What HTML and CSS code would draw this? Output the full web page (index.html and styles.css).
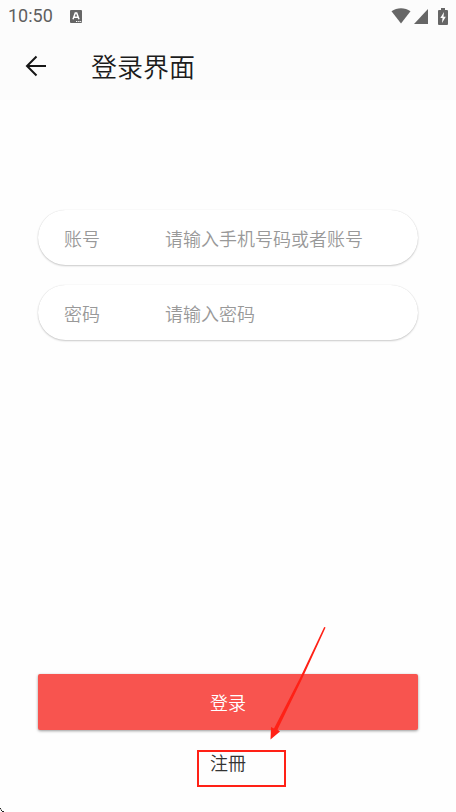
FILE: index.html
```html
<!DOCTYPE html>
<html lang="zh-CN">
<head>
<meta charset="utf-8">
<meta name="viewport" content="width=device-width, initial-scale=1">
<title>登录界面</title>
<link rel="stylesheet" href="styles.css">
</head>
<body>
<header class="top">
  <div class="status">
    <span class="clock">10:50</span>
    <svg class="input-icon" width="12" height="13" viewBox="0 0 12 13" aria-hidden="true">
      <rect width="12" height="13" rx="1" fill="#666"/>
      <path d="M3 9.300 5.300 3h1.400L9 9.300M4 7.200h4" fill="none" stroke="#fff" stroke-width="1.500"/>
      <path d="M6 11.500h1.300M8.200 11.500h1.300M10.200 11.500h1" stroke="#fff" stroke-width="1"/>
    </svg>
    <div class="signals">
      <svg width="20" height="16" viewBox="0 0 20 16" aria-hidden="true"><path d="M.5 3.200C6-.9 14-.9 19.500 3.200L10 15.500z" fill="#666"/></svg>
      <svg width="14" height="15" viewBox="0 0 14 15" aria-hidden="true"><path d="M14 0v15H0z" fill="#666"/></svg>
      <svg class="battery" width="10" height="17" viewBox="0 0 10 17" aria-hidden="true"><path d="M3 0h4v2h2q1 0 1 1v13q0 1-1 1H1q-1 0-1-1V3q0-1 1-1h2z" fill="#666"/><path d="M6 4 2.300 10h2.200L4 15l3.800-6.300H5.500z" fill="#fff"/></svg>
    </div>
  </div>
  <div class="appbar">
    <button class="back" type="button" aria-label="返回">
      <svg width="22" height="22" viewBox="0 0 22 22" aria-hidden="true"><path d="M21 11H2.500M11.500 1.500 2 11l9.500 9.500" fill="none" stroke="#161616" stroke-width="2"/></svg>
    </button>
    <h1>登录界面</h1>
  </div>
</header>
<form class="login">
  <div class="field">
    <label for="account">账号</label>
    <input id="account" type="text" placeholder="请输入手机号码或者账号">
  </div>
  <div class="field">
    <label for="password">密码</label>
    <input id="password" type="password" placeholder="请输入密码">
  </div>
  <div class="actions">
    <button class="submit" type="submit">登录</button>
    <a class="register" href="#register">注冊</a>
    <span class="mark"></span>
    <svg class="arrow" width="60" height="116" viewBox="0 0 60 116" aria-hidden="true"><path d="M56.200 1.900 57.600 2.600 34 54 9.500 104.500 12 106.500 2.500 114.500 3 102 6 103.500 32 53z" fill="#ff2116"/></svg>
  </div>
</form>
<svg class="corner" width="4" height="4" viewBox="0 0 4 4" aria-hidden="true"><path d="M0 0h1v1H0zM1 2h1v1H1zM2 3h2v1H2z" fill="#222"/><path d="M0 1h1v1H0zM1 1h1v1H1z" fill="#bbb"/></svg>
</body>
</html>
```
FILE: styles.css
```css
* {
  box-sizing: border-box;
}

body {
  margin: 0;
  min-height: 100vh;
  display: flex;
  flex-direction: column;
  background: #fefefe;
  color: #1c1c1c;
  font-family: "Noto Sans CJK SC", sans-serif;
}

.top {
  background: #fcfcfc;
}

.status {
  display: flex;
  align-items: center;
  height: 32px;
  padding: 0 8px;
}

.clock {
  color: #5f5f5f;
  font: 400 18px/32px Roboto, sans-serif;
}

.input-icon {
  margin-left: 17px;
}

.signals {
  display: flex;
  align-items: center;
  gap: 3px;
  margin-left: auto;
}

.battery {
  margin-left: 7px;
}

.appbar {
  display: flex;
  align-items: center;
  gap: 44px;
  height: 68px;
  padding: 0 25px;
}

.back {
  display: flex;
  padding: 0;
  border: 0;
  background: none;
}

h1 {
  margin: 0;
  font-size: 26px;
  font-weight: 350;
  line-height: 36px;
}

.login {
  flex: 1;
  display: flex;
  flex-direction: column;
  gap: 20px;
  padding: 110px 38px 34px;
}

.field {
  display: flex;
  align-items: center;
  height: 55px;
  padding: 0 26px;
  border-radius: 28px;
  background: #fff;
  box-shadow: 0 0 1px rgba(0, 0, 0, 0.14), 0 1px 2px rgba(0, 0, 0, 0.2);
  color: #999;
  font-size: 18px;
  font-weight: 350;
}

.field label {
  width: 101px;
}

.field input {
  flex: 1;
  min-width: 0;
  padding: 0;
  border: 0;
  outline: 0;
  background: none;
  color: #333;
  font: inherit;
}

.field input::placeholder {
  color: #999;
}

.actions {
  position: relative;
  display: flex;
  flex-direction: column;
  align-items: center;
  gap: 16px;
  margin-top: auto;
}

.submit {
  width: 100%;
  height: 56px;
  padding: 0;
  border: 0;
  border-radius: 2px;
  background: #f8544f;
  box-shadow: 0 1px 3px rgba(0, 0, 0, 0.4);
  color: #fff;
  font: 350 18px/28px "Noto Sans CJK SC", sans-serif;
}

.register {
  color: #333;
  font-size: 18px;
  font-weight: 350;
  line-height: 32px;
  text-decoration: none;
}

.mark {
  position: absolute;
  top: 76px;
  left: calc(50% - 31px);
  width: 89px;
  height: 37px;
  border: 2px solid #ff2116;
  pointer-events: none;
}

.arrow {
  position: absolute;
  top: -49px;
  left: calc(50% + 40px);
  pointer-events: none;
}

.corner {
  position: fixed;
  bottom: 0;
  left: 0;
}
```
